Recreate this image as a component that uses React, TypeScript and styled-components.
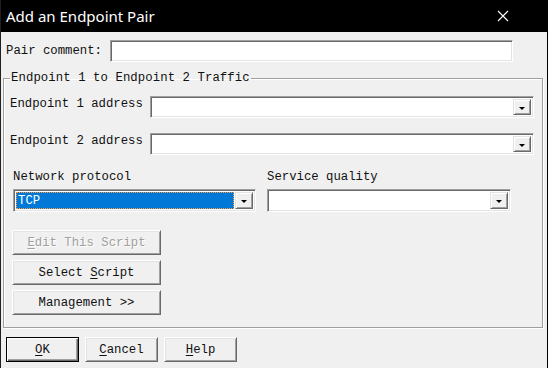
import styled, { createGlobalStyle } from 'styled-components';

const GlobalStyle = createGlobalStyle`
  html, body {
    margin: 0;
    padding: 0;
    background: #f0f0f0;
  }
  * {
    box-sizing: border-box;
  }
`;

const mono = `'Liberation Mono', 'DejaVu Sans Mono', monospace`;

const StyledWindow = styled.div`
  width: 548px;
  height: 368px;
  display: flex;
  flex-direction: column;
  background: #f0f0f0;
  border-left: 1px solid #202020;
  border-right: 1px solid #000;
  font-family: ${mono};
  font-size: 12.3px;
  color: #111;
  overflow: hidden;
`;

const StyledTitleBar = styled.div`
  height: 32px;
  flex: none;
  background: #000;
  display: flex;
  align-items: center;
  justify-content: space-between;
  padding: 0 38px 0 5px;

  h1 {
    margin: 0;
    font-family: 'Noto Sans', 'Open Sans', sans-serif;
    font-weight: 400;
    font-size: 15px;
    color: #fff;
  }

  svg {
    width: 12px;
    height: 12px;
  }
`;

const StyledPairRow = styled.div`
  display: flex;
  align-items: center;
  margin-top: 8px;
  padding-left: 5px;

  label {
    width: 104px;
  }
`;

const StyledTextBox = styled.div<{ $width: number }>`
  width: ${(p) => p.$width}px;
  height: 22px;
  background: #fff;
  border: 1px solid;
  border-color: #a0a0a0 #fff #fff #a0a0a0;
  box-shadow: inset 1px 1px 0 #696969, inset -1px -1px 0 #e3e3e3;
`;

const StyledGroup = styled.fieldset`
  margin: 9px 4px 0 2px;
  padding: 11px 6px 12px 6px;
  border: 1px solid #a0a0a0;
  box-shadow: 1px 1px 0 #fff, inset 1px 1px 0 #fff;
  min-width: 0;

  legend {
    padding: 0 1px;
    margin-left: 0;
    line-height: 14px;
    letter-spacing: 0.08px;
  }
`;

const StyledFieldRow = styled.div`
  display: flex;
  align-items: flex-start;

  & + & {
    margin-top: 15px;
  }

  label {
    width: 140px;
    line-height: 14px;
    padding-top: 1px;
  }
`;

const StyledCombo = styled.div<{ $width: number; $height?: number }>`
  width: ${(p) => p.$width}px;
  height: ${(p) => p.$height ?? 22}px;
  display: flex;
  align-items: stretch;
  background: #fff;
  border: 1px solid;
  border-color: #a0a0a0 #fff #fff #a0a0a0;
  box-shadow: inset 1px 1px 0 #696969, inset -1px -1px 0 #e3e3e3;
  padding: 2px;
`;

const StyledComboValue = styled.div<{ $selected?: boolean }>`
  flex: 1;
  margin-right: 1px;
  padding-left: 2px;
  line-height: 14px;
  display: flex;
  align-items: center;
  color: ${(p) => (p.$selected ? '#fff' : '#111')};
  background: ${(p) => (p.$selected ? '#0078d7' : 'transparent')};
  outline: ${(p) => (p.$selected ? '1px dotted #ff9a40' : 'none')};
  outline-offset: -1px;
`;

const StyledDropButton = styled.div`
  width: 18px;
  flex: none;
  display: flex;
  align-items: center;
  justify-content: center;
  background: #f0f0f0;
  border: 1px solid;
  border-color: #e3e3e3 #696969 #696969 #e3e3e3;
  box-shadow: inset 1px 1px 0 #fff, inset -1px -1px 0 #a0a0a0;

  &::after {
    content: '';
    border-left: 3px solid transparent;
    border-right: 3px solid transparent;
    border-top: 3px solid #000;
    margin-top: 2px;
  }
`;

const StyledColumns = styled.div`
  display: flex;
  margin-top: 15px;
  padding-left: 3px;
  gap: 11px;
`;

const StyledColumn = styled.div`
  display: flex;
  flex-direction: column;
  gap: 5px;

  label {
    line-height: 14px;
  }
`;

const StyledButtonStack = styled.div`
  display: flex;
  flex-direction: column;
  gap: 5px;
  margin-top: 18px;
  padding-left: 2px;
`;

const StyledButton = styled.button<{ $width: number; $default?: boolean }>`
  width: ${(p) => p.$width}px;
  height: 25px;
  padding: 0;
  font-family: ${mono};
  font-size: 12.3px;
  color: #111;
  background: #f0f0f0;
  border: 1px solid;
  border-color: ${(p) => (p.$default ? '#000' : '#fff #696969 #696969 #fff')};
  box-shadow: ${(p) =>
    p.$default
      ? 'inset 1px 1px 0 #fff, inset -1px -1px 0 #696969, inset -2px -2px 0 #a0a0a0'
      : 'inset 1px 1px 0 #e3e3e3, inset -1px -1px 0 #a0a0a0'};

  &:disabled {
    color: #a0a0a0;
    text-shadow: 1px 1px 0 #fff;
  }

  u {
    text-decoration-thickness: 1px;
    text-underline-offset: 2px;
  }
`;

const StyledFooter = styled.div`
  display: flex;
  gap: 6px;
  margin-top: 9px;
  padding-left: 5px;
`;

function Combo({
  width,
  height,
  value,
  selected,
}: {
  width: number;
  height?: number;
  value?: string;
  selected?: boolean;
}) {
  return (
    <StyledCombo $width={width} $height={height}>
      <StyledComboValue $selected={selected}>{value}</StyledComboValue>
      <StyledDropButton />
    </StyledCombo>
  );
}

export default function App() {
  return (
    <>
      <GlobalStyle />
      <StyledWindow>
        <StyledTitleBar>
          <h1>Add an Endpoint Pair</h1>
          <svg viewBox='0 0 12 12'>
            <path d='M1 1 L11 11 M11 1 L1 11' stroke='#fff' strokeWidth='1.1' />
          </svg>
        </StyledTitleBar>

        <StyledPairRow>
          <label>Pair comment:</label>
          <StyledTextBox $width={403} />
        </StyledPairRow>

        <StyledGroup>
          <legend>Endpoint 1 to Endpoint 2 Traffic</legend>
          <StyledFieldRow>
            <label>Endpoint 1 address</label>
            <Combo width={384} />
          </StyledFieldRow>
          <StyledFieldRow>
            <label>Endpoint 2 address</label>
            <Combo width={384} />
          </StyledFieldRow>

          <StyledColumns>
            <StyledColumn>
              <label>Network protocol</label>
              <Combo width={243} height={23} value='TCP' selected />
            </StyledColumn>
            <StyledColumn>
              <label>Service quality</label>
              <Combo width={244} height={23} />
            </StyledColumn>
          </StyledColumns>

          <StyledButtonStack>
            <StyledButton $width={149} disabled>
              <u>E</u>dit This Script
            </StyledButton>
            <StyledButton $width={149}>
              Select <u>S</u>cript
            </StyledButton>
            <StyledButton $width={149}>Management &gt;&gt;</StyledButton>
          </StyledButtonStack>
        </StyledGroup>

        <StyledFooter>
          <StyledButton $width={73} $default>
            <u>O</u>K
          </StyledButton>
          <StyledButton $width={73}>
            <u>C</u>ancel
          </StyledButton>
          <StyledButton $width={73}>
            <u>H</u>elp
          </StyledButton>
        </StyledFooter>
      </StyledWindow>
    </>
  );
}
